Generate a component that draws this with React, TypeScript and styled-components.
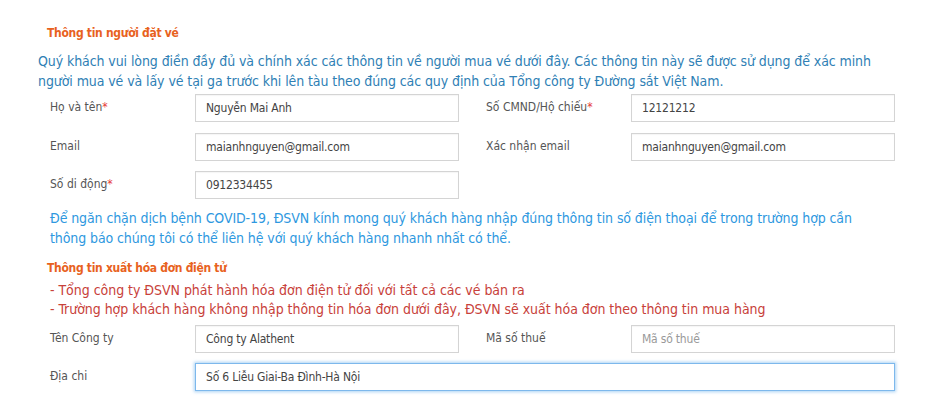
import React from "react";
import styled, { createGlobalStyle } from "styled-components";

const Global = createGlobalStyle`
  html, body { margin: 0; padding: 0; background: #fff; }
  body { font-family: "DejaVu Sans Condensed", "DejaVu Sans", "Noto Sans", sans-serif; font-stretch: condensed; }
  * { box-sizing: border-box; }
`;

const Page = styled.div`
  width: 933px;
  height: 410px;
  padding: 25px 0 0 38px;
  overflow: hidden;
`;

const SectionTitle = styled.div<{ $top?: number }>`
  font-size: 12px;
  font-weight: bold;
  color: #e8621e;
  line-height: 16px;
  padding-left: 9px;
  letter-spacing: -0.3px;
  margin-top: ${(p) => p.$top ?? 0}px;
`;

const Intro = styled.p`
  margin: 10px 0 0;
  font-size: 14px;
  line-height: 20px;
  color: #2f7fb5;
  letter-spacing: -0.09px;
`;

const Form = styled.div<{ $top: number }>`
  display: grid;
  grid-template-columns: 145px 264px 27px 145px 264px;
  row-gap: 10.5px;
  align-items: center;
  padding-left: 12px;
  margin-top: ${(p) => p.$top}px;
`;

const Label = styled.label`
  font-size: 12px;
  color: #555;
  line-height: 16px;
  margin-top: -2px;
`;

const Req = styled.span`
  color: #e53935;
`;

const Input = styled.input<{ $wide?: boolean; $focus?: boolean }>`
  height: 28px;
  width: 100%;
  border: 1px solid ${(p) => (p.$focus ? "#7db8ec" : "#d4d4d4")};
  box-shadow: ${(p) => (p.$focus ? "0 0 3px 1px rgba(102,175,233,0.55)" : "inset 0 1px 1px rgba(0,0,0,0.04)")};
  padding: 0 10px;
  font-family: inherit;
  font-stretch: condensed;
  font-size: 12px;
  color: #444;
  outline: none;
  letter-spacing: -0.2px;
  grid-column: ${(p) => (p.$wide ? "2 / 6" : "auto")};
  &::placeholder { color: #999; }
`;

const Spacer = styled.div`
  grid-column: 3;
`;

const Notice = styled.p`
  margin: 9px 0 0 12px;
  font-size: 14px;
  line-height: 20px;
  color: #2e98e0;
  letter-spacing: -0.1px;
`;

const RedList = styled.div`
  margin: 5px 0 0 12px;
  font-size: 14px;
  line-height: 19px;
  color: #c8413a;
  letter-spacing: -0.04px;
`;

export default function App() {
  return (
    <Page>
      <Global />
      <SectionTitle>Thông tin người đặt vé</SectionTitle>
      <Intro>
        Quý khách vui lòng điền đầy đủ và chính xác các thông tin về người mua vé dưới đây. Các thông tin này sẽ được sử dụng để xác minh
        <br />
        người mua vé và lấy vé tại ga trước khi lên tàu theo đúng các quy định của Tổng công ty Đường sắt Việt Nam.
      </Intro>
      <Form $top={3}>
        <Label>Họ và tên<Req>*</Req></Label>
        <Input defaultValue="Nguyễn Mai Anh" />
        <Spacer />
        <Label>Số CMND/Hộ chiếu<Req>*</Req></Label>
        <Input defaultValue="12121212" />
        <Label>Email</Label>
        <Input defaultValue="maianhnguyen@gmail.com" />
        <Spacer />
        <Label>Xác nhận email</Label>
        <Input defaultValue="maianhnguyen@gmail.com" />
        <Label>Số di động<Req>*</Req></Label>
        <Input defaultValue="0912334455" />
      </Form>
      <Notice>
        Để ngăn chặn dịch bệnh COVID-19, ĐSVN kính mong quý khách hàng nhập đúng thông tin số điện thoại để trong trường hợp cần
        <br />
        thông báo chúng tôi có thể liên hệ với quý khách hàng nhanh nhất có thể.
      </Notice>
      <SectionTitle $top={12}>Thông tin xuất hóa đơn điện tử</SectionTitle>
      <RedList>
        - Tổng công ty ĐSVN phát hành hóa đơn điện tử đối với tất cả các vé bán ra
        <br />
        - Trường hợp khách hàng không nhập thông tin hóa đơn dưới đây, ĐSVN sẽ xuất hóa đơn theo thông tin mua hàng
      </RedList>
      <Form $top={5.5}>
        <Label>Tên Công ty</Label>
        <Input defaultValue="Công ty Alathent" />
        <Spacer />
        <Label>Mã số thuế</Label>
        <Input placeholder="Mã số thuế" />
        <Label>Địa chi</Label>
        <Input $wide $focus defaultValue="Số 6 Liễu Giai-Ba Đình-Hà Nội" />
      </Form>
    </Page>
  );
}
